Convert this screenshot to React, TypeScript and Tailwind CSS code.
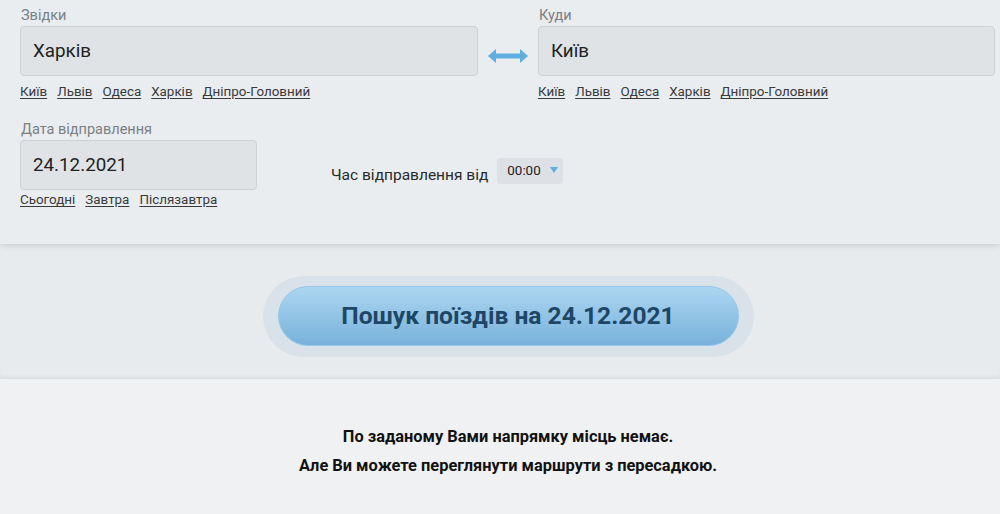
import React from "react";

const links = ["Київ", "Львів", "Одеса", "Харків", "Дніпро-Головний"];

function LinkRow({ items, mt }: { items: string[]; mt: string }) {
  return (
    <div className={`flex gap-[10px] ${mt} text-[13.4px] leading-[16px] text-[#3a3a3a]`}>
      {items.map((l) => (
        <span key={l} className="underline underline-offset-2">
          {l}
        </span>
      ))}
    </div>
  );
}

function Field({ label, value, w }: { label: string; value: string; w: string }) {
  return (
    <div className={w}>
      <div className="text-[14.5px] leading-[17px] text-[#7b7f83] ml-[1px] mb-[2px]">{label}</div>
      <div className="h-[50px] rounded-[4px] border border-[#cdd2d6] bg-[#dfe3e6] flex items-center px-[12px] text-[18.8px] text-[#222]">
        {value}
      </div>
    </div>
  );
}

export default function App() {
  return (
    <div className="w-[1000px] h-[514px] overflow-hidden bg-[#f0f1f3]" style={{ fontFamily: "Roboto, 'Liberation Sans', sans-serif" }}>
      <div className="relative z-10 bg-[#e9edf0] h-[244px] pt-[7px] pl-[20px] pr-[5px] shadow-[0_2px_6px_rgba(0,0,0,0.12)]">
        <div className="flex items-start">
          <div className="w-[458px] shrink-0">
            <Field label="Звідки" value="Харків" w="w-[458px]" />
            <LinkRow items={links} mt="mt-[8px]" />
          </div>
          <div className="w-[60px] shrink-0 h-[69px] flex items-end justify-center pb-[13px]">
            <svg width="40" height="14" viewBox="0 0 40 14">
              <path d="M0 7 L8 0 L8 4.5 L32 4.5 L32 0 L40 7 L32 14 L32 9.5 L8 9.5 L8 14 Z" fill="#5eaee0" />
            </svg>
          </div>
          <div className="w-[457px] shrink-0">
            <Field label="Куди" value="Київ" w="w-[457px]" />
            <LinkRow items={links} mt="mt-[8px]" />
          </div>
        </div>
        <div className="flex items-start mt-[21px]">
          <div className="w-[237px] shrink-0">
            <Field label="Дата відправлення" value="24.12.2021" w="w-[237px]" />
            <LinkRow items={["Сьогодні", "Завтра", "Післязавтра"]} mt="mt-[2px]" />
          </div>
          <div className="flex items-start ml-[74px] mt-[37px]">
            <span className="text-[15.5px] leading-[18px] mt-[8px] text-[#2a2a2a]">Час відправлення від</span>
            <div className="ml-[9px] h-[26px] w-[66px] rounded-[3px] bg-[#dde1e5] flex items-center pl-[10px] text-[13.4px] text-[#222]">
              00:00
              <svg className="ml-[9px] -mt-[3px]" width="8" height="6" viewBox="0 0 8 6">
                <path d="M0 0 L8 0 L4 6 Z" fill="#5eaee0" />
              </svg>
            </div>
          </div>
        </div>
      </div>
      <div className="h-[135px] bg-[#e8ebee] border-b border-[#dcdfe2] flex items-center justify-center pl-[16px] shadow-[inset_0_-3px_4px_-2px_rgba(0,0,0,0.06)]">
        <div className="w-[491px] h-[81px] mt-[10px] rounded-full bg-[#dae2e9] flex items-center justify-center">
          <div className="w-[461px] h-[60px] rounded-full border border-[#94c8ec] bg-gradient-to-b from-[#acd6f1] to-[#78b2da] flex items-center justify-center text-[24.6px] font-bold text-[#1e4766]">
            Пошук поїздів на 24.12.2021
          </div>
        </div>
      </div>
      <div className="pt-[43px] pl-[16px] text-center text-[16.4px] font-bold text-[#111] leading-[29px]">
        <div>По заданому Вами напрямку місць немає.</div>
        <div>Але Ви можете переглянути маршрути з пересадкою.</div>
      </div>
    </div>
  );
}
